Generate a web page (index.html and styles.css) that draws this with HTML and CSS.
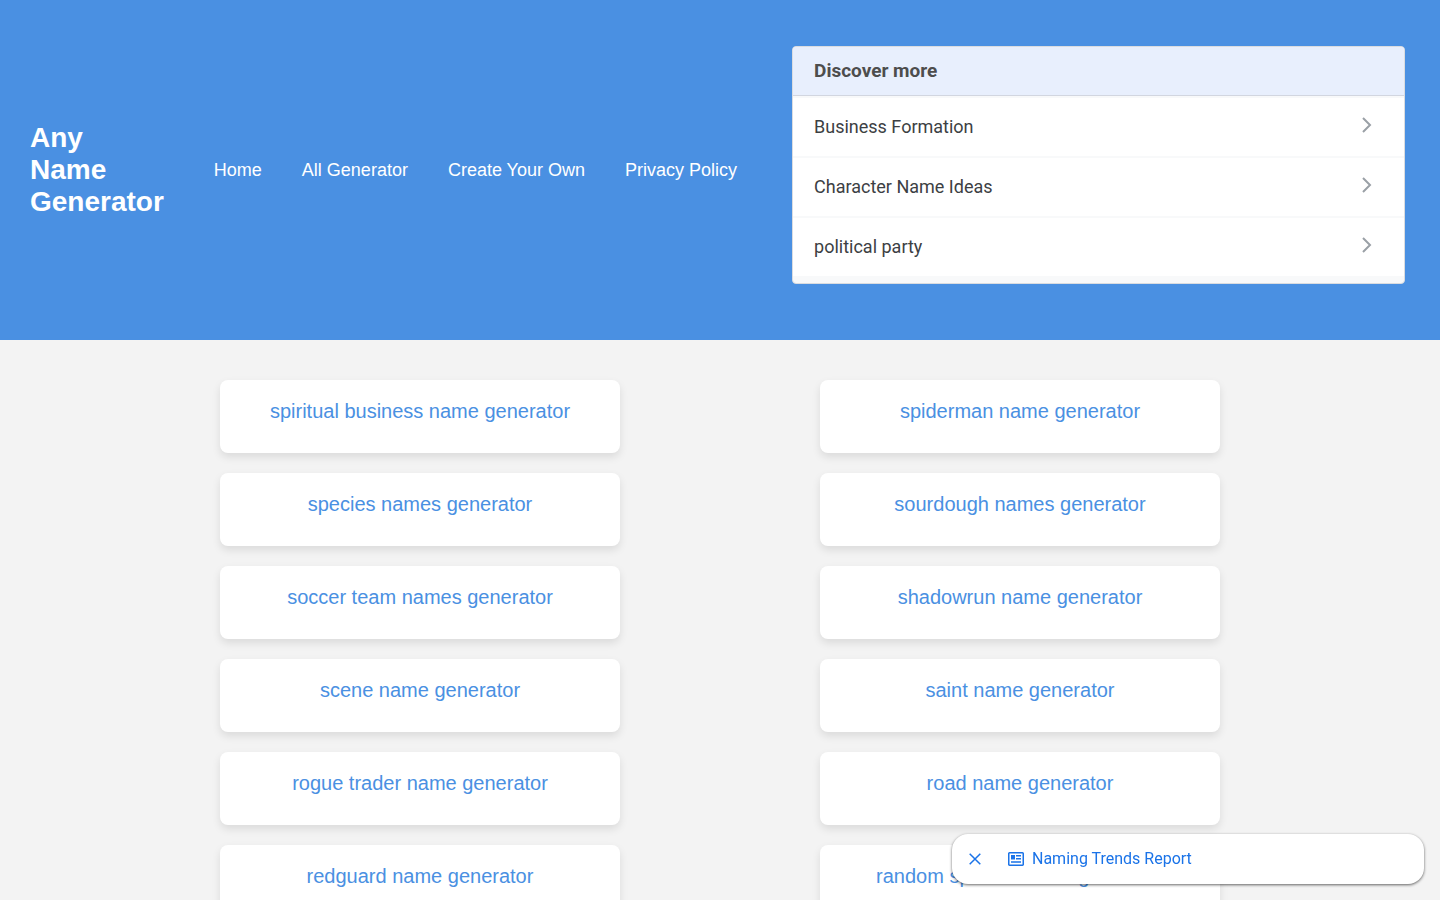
FILE: index.html
```
<!DOCTYPE html>
<html lang="en">
<head>
  <meta charset="UTF-8">
  <meta name="viewport" content="width=device-width, initial-scale=1.0">
  <title>Any Name Generator</title>
  <link rel="stylesheet" href="styles.css">
</head>
<body>

  <header class="site-header">
    <h1 class="logo">Any Name Generator</h1>

    <nav class="main-nav">
      <a href="#">Home</a>
      <a href="#">All Generator</a>
      <a href="#">Create Your Own</a>
      <a href="#">Privacy Policy</a>
    </nav>

    <!-- Related searches -->
    <div class="discover-slot">
      <section class="discover">
        <h2>Discover more</h2>
        <a class="discover-item" href="#">
          <span>Business Formation</span>
          <svg width="12" height="18" viewBox="0 0 12 18"><path d="M2 2l7 7-7 7"/></svg>
        </a>
        <a class="discover-item" href="#">
          <span>Character Name Ideas</span>
          <svg width="12" height="18" viewBox="0 0 12 18"><path d="M2 2l7 7-7 7"/></svg>
        </a>
        <a class="discover-item" href="#">
          <span>political party</span>
          <svg width="12" height="18" viewBox="0 0 12 18"><path d="M2 2l7 7-7 7"/></svg>
        </a>
      </section>
    </div>
  </header>

  <!-- Generator list -->
  <main class="generator-grid">
    <div class="card"><a href="#">spiritual business name generator</a></div>
    <div class="card"><a href="#">spiderman name generator</a></div>
    <div class="card"><a href="#">species names generator</a></div>
    <div class="card"><a href="#">sourdough names generator</a></div>
    <div class="card"><a href="#">soccer team names generator</a></div>
    <div class="card"><a href="#">shadowrun name generator</a></div>
    <div class="card"><a href="#">scene name generator</a></div>
    <div class="card"><a href="#">saint name generator</a></div>
    <div class="card"><a href="#">rogue trader name generator</a></div>
    <div class="card"><a href="#">road name generator</a></div>
    <div class="card"><a href="#">redguard name generator</a></div>
    <div class="card"><a href="#">random species name generator</a></div>
  </main>

  <!-- Floating bar -->
  <div class="floating-bar">
    <button class="close-btn" type="button" aria-label="Close">
      <svg width="12" height="12" viewBox="0 0 12 12"><path d="M.7 .7l10.600 10.600M11.300 .7L.7 11.300"/></svg>
    </button>
    <a class="report-link" href="#">
      <svg width="16" height="14" viewBox="0 0 16 14">
        <path class="line" d="M1.500 .75h13a.75.75 0 0 1 .75.75v11a.75.75 0 0 1-.75.75h-13a.75.75 0 0 1-.75-.75v-11a.75.75 0 0 1 .75-.75z"/>
        <path class="fill" d="M3 3h4v4.500H3z"/>
        <path class="line" d="M8 3.700h5M8 6.700h5M3 10h10"/>
      </svg>
      <span>Naming Trends Report</span>
    </a>
  </div>

</body>
</html>
```
FILE: styles.css
```
* {
  box-sizing: border-box;
}

body {
  margin: 0;
  background-color: #f3f3f3;
  font-family: "Liberation Sans", Arial, sans-serif;
  overflow-x: hidden;
}

a {
  text-decoration: none;
}

/* Header */
.site-header {
  display: flex;
  align-items: center;
  gap: 50px;
  padding: 40px 30px;
  background-color: #4a90e2;
  color: #fff;
}

.logo {
  width: min-content;
  margin: 0;
  font-size: 28px;
  line-height: 32px;
}

.main-nav {
  display: flex;
  gap: 40px;
  white-space: nowrap;
}

.main-nav a {
  color: #fff;
  font-size: 18px;
}

.discover-slot {
  flex: 1;
  padding: 6px 5px 16px;
}

.discover {
  padding-bottom: 7px;
  border: 1px solid #dadce0;
  border-radius: 4px;
  background-color: #f8f9fa;
  color: #3c4043;
  font-family: "Google Sans", Roboto, sans-serif;
  overflow: hidden;
}

.discover h2 {
  margin: 0;
  padding: 0 21px;
  border-bottom: 1px solid #d2d6e0;
  background-color: #e8effd;
  color: #4d4d4d;
  font-size: 19px;
  line-height: 48px;
}

.discover-item {
  display: flex;
  align-items: center;
  justify-content: space-between;
  height: 60px;
  padding: 0 31px 2px 21px;
  border-top: 2px solid #f8f9fa;
  background-color: #fff;
  color: #3c4043;
  font-size: 18px;
}

.discover-item svg {
  margin-bottom: 2px;
  fill: none;
  stroke: #9aa0a6;
  stroke-width: 2;
}

/* Generator cards */
.generator-grid {
  display: grid;
  grid-template-columns: 1fr 1fr;
  justify-items: center;
  gap: 20px 0;
  max-width: 1200px;
  margin: 0 auto;
  padding: 40px 0;
}

.card {
  width: 100%;
  max-width: 400px;
  padding: 20px 20px 30px;
  border-radius: 8px;
  background-color: #fff;
  box-shadow: 0 4px 8px rgba(0, 0, 0, 0.1);
  text-align: center;
  font-size: 20px;
  line-height: 23px;
}

.card a {
  color: #4a90e2;
}

/* Floating bar */
.floating-bar {
  position: fixed;
  right: 16px;
  bottom: 16px;
  display: flex;
  align-items: center;
  width: 472px;
  max-width: calc(100% - 32px);
  height: 50px;
  border-radius: 16px;
  background-color: #fff;
  box-shadow: 0 1px 3px rgba(0, 0, 0, 0.6);
  font-family: Roboto, sans-serif;
}

.close-btn {
  display: flex;
  align-items: center;
  justify-content: center;
  width: 46px;
  height: 50px;
  padding: 0;
  border: 0;
  background: none;
  cursor: pointer;
}

.close-btn svg {
  fill: none;
  stroke: #1a73e8;
  stroke-width: 1.5;
}

.report-link {
  display: flex;
  align-items: center;
  gap: 8px;
  margin-left: 10px;
  color: #1a73e8;
  font-size: 16px;
}

.report-link span {
  padding-bottom: 2px;
}

.report-link .line {
  fill: none;
  stroke: #1a73e8;
  stroke-width: 1.5;
}

.report-link .fill {
  fill: #1a73e8;
}
```
